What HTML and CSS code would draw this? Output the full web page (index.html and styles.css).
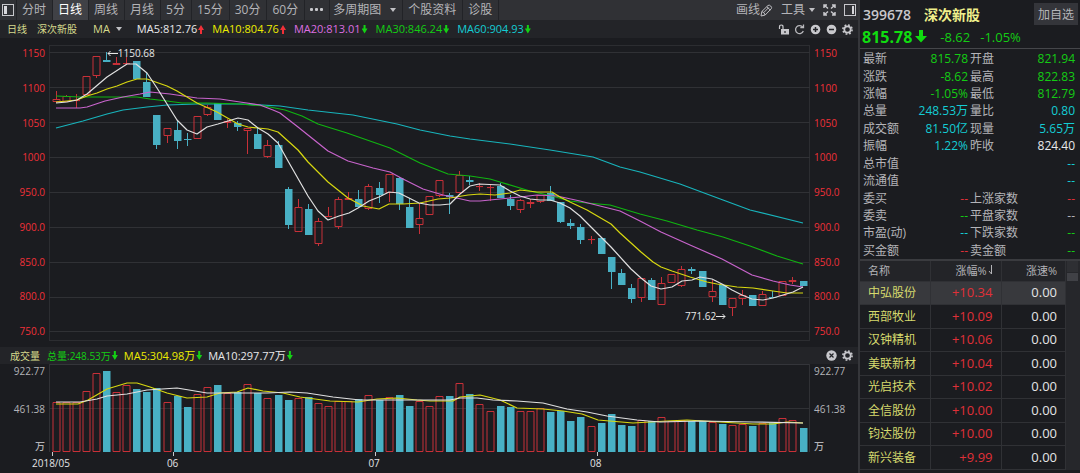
FILE: index.html
```html
<!DOCTYPE html>
<html lang="zh-CN">
<head>
    <meta charset="UTF-8">
    <meta name="viewport" content="width=device-width, initial-scale=1.0">
    <title>深次新股 399678</title>
    <link rel="stylesheet" href="styles.css">
</head>
<body>
    <main class="main">
        <nav class="toolbar">
            <button class="tool-icon panel-left" aria-label="左侧栏">
                <svg width="12" height="12" viewBox="0 0 12 12"><rect x="0.5" y="0.5" width="11" height="11" fill="none" stroke="#c8c8cc"/><rect x="2" y="2" width="3" height="8" fill="#d8d8dc"/></svg>
            </button>
            <button class="tab">分时</button>
            <button class="tab active">日线</button>
            <button class="tab">周线</button>
            <button class="tab">月线</button>
            <button class="tab">5分</button>
            <button class="tab">15分</button>
            <button class="tab">30分</button>
            <button class="tab">60分</button>
            <button class="tab" aria-label="更多">
                <svg width="13" height="4" viewBox="0 0 13 4" fill="#c8c8cc"><rect width="3" height="3" rx="1"/><rect x="5" width="3" height="3" rx="1"/><rect x="10" width="3" height="3" rx="1"/></svg>
            </button>
            <button class="tab period">多周期图<i class="caret"></i></button>
            <button class="tab">个股资料</button>
            <button class="tab">诊股</button>
            <div class="tools">
                <button>画线<svg width="13" height="13" viewBox="0 0 13 13" fill="none" stroke="#c0c0c4"><path d="M1 12l.8-4.500L8 1.500q1.200-1 2.700.5t.6 2.700L5.200 11zM1.800 7.500q2.500.5 3.400 3.500M6.800 2.700l3.500 3.400M3.800 8.500l5-5"/></svg></button>
                <button>工具<i class="caret"></i></button>
                <button aria-label="全屏"><svg width="13" height="12" viewBox="0 0 13 12" fill="none" stroke="#c8c8cc" stroke-width="1.500"><path d="M1 4V1h3M1 1l4 3.500M9 1h3v3M12 1L8 4.500M1 8v3h3M1 11l4-3.500M9 11h3V8M12 11L8 7.500"/></svg></button>
                <button aria-label="右侧栏"><svg width="12" height="12" viewBox="0 0 12 12"><rect x="0.5" y="0.5" width="11" height="11" fill="none" stroke="#c8c8cc"/><rect x="8" y="2" width="2" height="8" fill="#d8d8dc"/></svg></button>
            </div>
        </nav>

        <section class="legend">
            <span class="name">日线</span>
            <span class="name stock">深次新股</span>
            <button class="ma-select">MA<i class="caret"></i></button>
            <span class="ma white">MA5:812.76<i class="arrow up"></i></span>
            <span class="ma yellow">MA10:804.76<i class="arrow up"></i></span>
            <span class="ma purple">MA20:813.01<i class="arrow down"></i></span>
            <span class="ma green">MA30:846.24<i class="arrow down"></i></span>
            <span class="ma cyan">MA60:904.93<i class="arrow down"></i></span>
            <div class="legend-icons">
                <button aria-label="锁定"><svg width="11" height="11" viewBox="0 0 11 11"><path d="M1.500 5V3q0-2 1.800-2T5 3v2" fill="none" stroke="#c8c8cc" stroke-width="1.200"/><path d="M3 5h8v5.500H3z" fill="#c8c8cc"/><path d="M7 7v2" stroke="#232428" stroke-width="1.200"/></svg></button>
                <button aria-label="刷新"><svg width="11" height="11" viewBox="0 0 11 11" fill="none" stroke="#b8b8bc" stroke-width="1.300"><path d="M8.800 3.200A4 4 0 1 0 9.300 7M6.300 3.700h3.200V.5"/></svg></button>
                <button aria-label="放大"><svg width="11" height="11" viewBox="0 0 11 11"><circle cx="5.500" cy="5.500" r="4.800" fill="#c8c8cc"/><path d="M3 5.500h5M5.500 3v5" stroke="#232428" stroke-width="1.500"/></svg></button>
                <button aria-label="缩小"><svg width="11" height="11" viewBox="0 0 11 11"><circle cx="5.500" cy="5.500" r="4.800" fill="#c8c8cc"/><path d="M3 5.500h5" stroke="#232428" stroke-width="1.500"/></svg></button>
                <button aria-label="设置"><svg width="11" height="11" viewBox="0 0 11 11" fill="none" stroke="#c8c8cc"><circle cx="5.500" cy="5.500" r="3.200" stroke-width="1.700"/><circle cx="5.500" cy="5.500" r="4.600" stroke-width="1.600" stroke-dasharray="1.800 1.813"/></svg></button>
            </div>
        </section>

        <section class="chart">
            <div class="axis axis-left">
                <span>1150</span><span>1100</span><span>1050</span><span>1000</span><span>950.0</span><span>900.0</span><span>850.0</span><span>800.0</span><span>750.0</span>
            </div>
            <div class="plot">
                <svg id="kline" viewBox="49 45 761 296" preserveAspectRatio="none"></svg>
                <span class="note high"><svg width="11" height="7" viewBox="0 0 11 7" fill="none" stroke="#e8e8e8"><path d="M11 3.500H1M3.500 1L1 3.500 3.500 6"/></svg>1150.68</span>
                <span class="note low">771.62<svg width="10" height="7" viewBox="0 0 10 7" fill="none" stroke="#e8e8e8"><path d="M0 3.500h9M6.500 1L9 3.500 6.500 6"/></svg></span>
            </div>
            <div class="axis">
                <span>1150</span><span>1100</span><span>1050</span><span>1000</span><span>950.0</span><span>900.0</span><span>850.0</span><span>800.0</span><span>750.0</span>
            </div>
        </section>

        <section class="legend volume-legend">
            <span class="name">成交量</span>
            <span class="ma small green">总量:248.53万<i class="arrow down"></i></span>
            <span class="ma yellow">MA5:304.98万<i class="arrow down"></i></span>
            <span class="ma white">MA10:297.77万<i class="arrow down"></i></span>
            <div class="legend-icons">
                <button aria-label="关闭"><svg width="11" height="11" viewBox="0 0 11 11"><circle cx="5.500" cy="5.500" r="5.200" fill="#c8c8cc"/><path d="M3.500 3.500l4 4M7.500 3.500l-4 4" stroke="#232428" stroke-width="1.200"/></svg></button>
                <button aria-label="设置"><svg width="11" height="11" viewBox="0 0 11 11" fill="none" stroke="#c8c8cc"><circle cx="5.500" cy="5.500" r="3.200" stroke-width="1.700"/><circle cx="5.500" cy="5.500" r="4.600" stroke-width="1.600" stroke-dasharray="1.800 1.813"/></svg></button>
            </div>
        </section>

        <section class="chart volume">
            <div class="axis axis-left"><span>922.77</span><span>461.38</span><span>万</span></div>
            <div class="plot"><svg id="volume" viewBox="49 364 761 93" preserveAspectRatio="none"></svg></div>
            <div class="axis"><span>922.77</span><span>461.38</span><span>万</span></div>
        </section>

        <div class="dates"><span>2018/05</span><span>06</span><span>07</span><span>08</span></div>
    </main>

    <aside class="side">
        <header class="stock-head">
            <div class="title">
                <span class="code">399678</span>
                <h1>深次新股</h1>
                <button class="add">加自选</button>
            </div>
            <div class="price">
                <strong>815.78</strong>
                <svg width="12" height="13" viewBox="0 0 12 13" fill="#10dc10"><path d="M4 0h4v6h4l-6 6.500L0 6h4z"/></svg>
                <span class="change">-8.62</span>
                <span>-1.05%</span>
            </div>
        </header>

        <dl class="quote">
            <div><dt>最新</dt><dd class="green">815.78</dd></div>
            <div><dt>开盘</dt><dd class="green">821.94</dd></div>
            <div><dt>涨跌</dt><dd class="green">-8.62</dd></div>
            <div><dt>最高</dt><dd class="green">822.83</dd></div>
            <div><dt>涨幅</dt><dd class="green">-1.05%</dd></div>
            <div><dt>最低</dt><dd class="green">812.79</dd></div>
            <div><dt>总量</dt><dd class="cyan">248.53万</dd></div>
            <div><dt>量比</dt><dd class="cyan">0.80</dd></div>
            <div><dt>成交额</dt><dd class="cyan">81.50亿</dd></div>
            <div><dt>现量</dt><dd class="cyan">5.65万</dd></div>
            <div><dt>振幅</dt><dd class="cyan">1.22%</dd></div>
            <div><dt>昨收</dt><dd class="white">824.40</dd></div>
            <div class="wide"><dt>总市值</dt><dd class="cyan">--</dd></div>
            <div class="wide"><dt>流通值</dt><dd class="cyan">--</dd></div>
            <div><dt>委买</dt><dd class="red">--</dd></div>
            <div><dt>上涨家数</dt><dd class="red">--</dd></div>
            <div><dt>委卖</dt><dd class="green">--</dd></div>
            <div><dt>平盘家数</dt><dd>--</dd></div>
            <div><dt>市盈(动)</dt><dd class="cyan">--</dd></div>
            <div><dt>下跌家数</dt><dd class="green">--</dd></div>
            <div><dt>买金额</dt><dd class="red">--</dd></div>
            <div><dt>卖金额</dt><dd class="green">--</dd></div>
        </dl>

        <div class="list">
            <table>
                <thead>
                    <tr><th>名称</th><th>涨幅%<svg width="5" height="10" viewBox="0 0 5 10" fill="none" stroke="#b4b4b8"><path d="M3.500 0v9L1 6"/></svg></th><th>涨速%</th></tr>
                </thead>
                <tbody>
                    <tr class="selected"><td>中弘股份</td><td>+10.34</td><td>0.00</td></tr>
                    <tr><td>西部牧业</td><td>+10.09</td><td>0.00</td></tr>
                    <tr><td>汉钟精机</td><td>+10.06</td><td>0.00</td></tr>
                    <tr><td>美联新材</td><td>+10.04</td><td>0.00</td></tr>
                    <tr><td>光启技术</td><td>+10.02</td><td>0.00</td></tr>
                    <tr><td>全信股份</td><td>+10.00</td><td>0.00</td></tr>
                    <tr><td>钧达股份</td><td>+10.00</td><td>0.00</td></tr>
                    <tr><td>新兴装备</td><td>+9.99</td><td>0.00</td></tr>
                </tbody>
            </table>
            <div class="scroll"><i class="scroll-up"></i><i class="scroll-thumb"></i></div>
        </div>
    </aside>

    <script src="chart.js"></script>
</body>
</html>
```

FILE: styles.css
```css
* {
    box-sizing: border-box;
}

body {
    display: grid;
    grid-template-columns: minmax(0, 1fr) 222px;
    min-height: 100vh;
    margin: 0;
    background: #1b1c20;
    color: #b4b4b8;
    font-family: "Open Sans", "Noto Sans CJK SC", sans-serif;
    font-size: 12px;
    overflow: hidden;
}

button {
    display: flex;
    align-items: center;
    padding: 0;
    border: 0;
    background: none;
    color: inherit;
    font: inherit;
    cursor: pointer;
}

svg {
    display: block;
}

.white { color: #e8e8ea; }
.yellow { color: #ecec00; }
.purple { color: #dc6ee0; }
.green { color: #14cc14; }
.cyan { color: #14ccd4; }
.red { color: #e03038; }

/* toolbar */
.toolbar {
    display: flex;
    height: 20px;
    background: #303135;
    line-height: 20px;
    white-space: nowrap;
}

.tool-icon {
    width: 17px;
    padding-left: 2px;
    border-right: 1px solid #222327;
}

.tab {
    padding: 0 6px 0 5px;
    border-right: 1px solid #222327;
}

.tab.active {
    background: #404146;
    color: #fff;
}

.period {
    padding-left: 3px;
}

.caret {
    margin-left: 9px;
    border: 3px solid transparent;
    border-top: 4px solid #c0c0c4;
    border-bottom: 0;
}

.tools {
    display: flex;
    gap: 8px;
    margin-left: auto;
    padding-right: 2px;
}

.tools .caret {
    margin-left: 4px;
}

/* indicator rows */
.legend {
    display: flex;
    align-items: center;
    height: 18px;
    padding: 0 5px 0 7px;
    background: #232428;
    font-size: 11px;
    line-height: 16px;
    white-space: nowrap;
}

.name {
    color: #d6da8c;
    font-size: 10px;
}

.stock {
    margin-left: 10px;
}

.ma-select {
    margin: 0 15px 0 16px;
    color: #d6da8c;
}

.ma-select .caret {
    margin-left: 6px;
}

.ma {
    display: flex;
    align-items: center;
    margin-right: 8px;
}

.ma.small {
    margin-left: 7px;
    font-size: 10px;
}

.arrow {
    width: 6px;
    height: 9px;
    margin-left: 1px;
    background: #14d014;
    clip-path: polygon(33% 0, 67% 0, 67% 45%, 100% 45%, 50% 100%, 0 45%, 33% 45%);
}

.arrow.up {
    background: #f03038;
    transform: rotate(180deg);
}

.legend-icons {
    display: flex;
    gap: 5px;
    margin-left: auto;
}

/* charts */
.chart {
    display: grid;
    grid-template-columns: 49px minmax(0, 1fr) 48px;
    height: 296px;
    margin: 7px 0 6px;
}

.plot {
    position: relative;
}

.plot svg[id] {
    width: 100%;
    height: 100%;
}

.axis {
    display: flex;
    flex-direction: column;
    justify-content: space-between;
    padding: 1px 0 3px 4px;
    color: #f03038;
    font-size: 10px;
    font-weight: 500;
    line-height: 14px;
}

.axis-left {
    padding-right: 4px;
    text-align: right;
}

.note {
    position: absolute;
    display: flex;
    align-items: center;
    color: #e8e8e8;
    font-size: 10px;
    font-weight: 500;
    line-height: 14px;
}

.high {
    top: 1px;
    left: 7.6%;
}

.low {
    right: 11%;
    bottom: 18px;
}

.volume-legend {
    height: 17px;
    padding-left: 10px;
}

.volume-legend .ma {
    margin-right: 6px;
}

.volume {
    height: 93px;
    margin: 0;
}

.volume .axis {
    padding: 0 0 4px 4px;
    color: #b4b4b8;
}

.volume .axis-left {
    padding-right: 4px;
}

.dates {
    display: grid;
    grid-template-columns: 15% 25% 27.5% 1fr;
    padding-left: 52px;
    color: #e4e4e6;
    font-size: 10px;
    font-weight: 500;
    line-height: 13px;
}

.dates span {
    text-indent: -6px;
}

.dates span:first-child {
    text-indent: -20px;
}

/* right panel */
.side {
    border-left: 2px solid #35363a;
}

.stock-head {
    padding: 3px 2px 0 3px;
    border-bottom: 1px solid #45464a;
}

.title {
    display: flex;
    align-items: center;
    height: 22px;
}

.code {
    color: #c8c8cc;
    font-size: 14px;
    font-weight: 600;
}

.title h1 {
    margin: 0 0 0 13px;
    color: #f0f08c;
    font-size: 14px;
    font-weight: bold;
}

.add {
    height: 22px;
    margin-left: auto;
    padding: 0 4px;
    background: #34353a;
}

.price {
    display: flex;
    align-items: center;
    height: 23px;
    color: #14cc14;
    font-size: 13px;
}

.price strong {
    margin: 0 3px 0 -1px;
    color: #10dc10;
    font-size: 16px;
}

.change {
    margin: 0 10px 0 13px;
}

.quote {
    display: grid;
    grid-template-columns: 1fr 1fr;
    grid-auto-rows: 1fr;
    column-gap: 2px;
    height: 210px;
    margin: 0;
    padding: 1px 5px 0 3px;
}

.quote div {
    display: flex;
    align-items: center;
    justify-content: space-between;
    line-height: 17px;
}

.quote .wide {
    grid-column: span 2;
}

.quote dd {
    margin: 0;
}

.list {
    display: flex;
    border-top: 2px solid #3a3b3f;
}

table {
    flex: 1;
    border-collapse: collapse;
    table-layout: fixed;
}

th,
td {
    padding: 0 8px;
    border-right: 1px solid #303135;
    border-bottom: 1px solid #303135;
    text-align: right;
    line-height: 17px;
}

th {
    height: 20px;
    background: #232428;
    font-size: 11px;
    font-weight: normal;
}

th svg {
    display: inline-block;
    margin-left: 1px;
}

th:first-child,
td:first-child {
    width: 70px;
    text-align: left;
}

th:nth-child(2) {
    width: 71px;
}

td {
    height: 23px;
    color: #e4e4e6;
    font-size: 13px;
}

tr:nth-child(even) td {
    height: 24px;
}

td:first-child {
    color: #d6da6e;
    font-size: 12px;
}

td:nth-child(2) {
    color: #e03038;
}

.selected {
    background: #38393d;
}

.scroll {
    width: 14px;
    padding: 0 2px 0 1px;
    background: #26272b;
}

.scroll i {
    display: block;
}

.scroll-up {
    height: 11px;
    background: #2e2f33;
}

.scroll-thumb {
    height: 8px;
    margin-top: 1px;
    background: #404146;
}
```

FILE: chart.js
```js
// one row per day: [rising, body top, body bottom, high, low, volume top]
const days = [
    [1, 99, 102, 91, 103, 402], [1, 96, 102, 95, 102, 402], [1, 100, 100, 94, 108, 402],
    [1, 76, 95, 76, 95, 391], [1, 56, 76, 56, 78, 373], [0, 60, 62, 52, 62, 371],
    [1, 63, 65, 57, 65, 392], [1, 63, 63, 57, 65, 385], [0, 61, 79, 61, 79, 389],
    [0, 82, 97, 73, 97, 392], [0, 115, 145, 115, 149, 388], [1, 128, 136, 128, 143, 402],
    [0, 130, 141, 120, 149, 396], [0, 139, 139, 133, 146, 407], [1, 116, 139, 116, 139, 394],
    [1, 107, 115, 105, 116, 387], [0, 103, 120, 103, 120, 385], [1, 121, 123, 119, 128, 393],
    [0, 123, 127, 121, 131, 392], [1, 128, 131, 128, 154, 384], [0, 134, 149, 127, 149, 393],
    [1, 145, 157, 140, 158, 398], [0, 145, 168, 141, 168, 395], [0, 189, 225, 187, 229, 400],
    [1, 207, 232, 199, 232, 398], [0, 209, 235, 204, 235, 397], [1, 221, 244, 218, 246, 403],
    [1, 216, 216, 207, 216, 406], [1, 199, 227, 197, 229, 401], [1, 198, 200, 192, 200, 401],
    [0, 199, 207, 190, 207, 399], [1, 186, 209, 184, 210, 395], [0, 188, 195, 182, 203, 400],
    [1, 174, 193, 174, 202, 397], [0, 178, 204, 177, 210, 395], [0, 207, 228, 198, 228, 406],
    [1, 218, 225, 203, 234, 401], [1, 196, 215, 196, 215, 406], [1, 180, 196, 180, 197, 396],
    [0, 195, 197, 193, 214, 396], [1, 175, 193, 171, 193, 383], [0, 180, 182, 176, 185, 394],
    [1, 186, 186, 183, 191, 404], [1, 187, 188, 185, 201, 411], [0, 186, 198, 183, 198, 406],
    [0, 199, 206, 195, 210, 407], [1, 200, 210, 199, 213, 411], [1, 202, 204, 199, 208, 411],
    [1, 195, 202, 195, 203, 408], [0, 193, 201, 186, 201, 412], [0, 202, 222, 202, 223, 411],
    [0, 223, 226, 219, 229, 421], [0, 227, 240, 224, 244, 417], [1, 239, 239, 236, 244, 426],
    [0, 238, 254, 238, 254, 423], [0, 257, 272, 257, 289, 414], [0, 273, 285, 269, 285, 425],
    [0, 288, 299, 284, 303, 426], [1, 278, 298, 278, 302, 420], [0, 280, 300, 278, 300, 421],
    [1, 283, 305, 277, 305, 417], [1, 274, 283, 274, 283, 421], [1, 269, 286, 266, 287, 420],
    [0, 269, 271, 267, 274, 421], [0, 271, 287, 271, 287, 421], [1, 291, 297, 280, 302, 422],
    [0, 285, 305, 285, 305, 424], [1, 298, 308, 298, 316, 425], [1, 295, 299, 290, 305, 424],
    [0, 295, 306, 295, 306, 426], [1, 294, 306, 291, 306, 423], [0, 297, 297, 291, 297, 423],
    [1, 281, 296, 281, 296, 418], [1, 280, 282, 277, 284, 420], [0, 281, 286, 281, 286, 428]
];

const priceLines = {
    '#18b4bc': '56,128 83,121 107,114 123,110 147,107 167,105 197,104 240,104 280,106 308,110 353,115 397,124 420,130 450,136 470,139 510,144 550,150 593,157 620,167 640,172 680,184 723,200 750,210 803,223',
    '#10b410': '56,96 80,97 100,97 137,97 150,99 167,101 182,103 207,103 240,104 265,106 285,110 302,116 318,124 347,133 390,148 420,163 448,174 470,176 490,179 500,182 530,191 552,196 570,201 587,203 610,205 640,214 667,221 697,230 723,237 750,246 777,256 803,264',
    '#c864cc': '56,108 80,108 87,107 105,101 123,97 140,94 150,92 170,94 197,98 220,99 240,102 260,105 273,110 280,113 298,127 328,151 348,161 373,168 390,172 403,179 423,189 443,195 470,201 480,201 500,199 520,197 537,195 557,196 580,201 600,206 620,211 640,221 661,232 690,245 722,259 752,275 773,281 790,285 803,287',
    '#d8d810': '56,102 67,101 77,100 87,96 97,93 107,89 117,86 127,82 137,79 147,79 167,86 177,91 197,103 217,112 238,124 248,127 258,128 268,129 278,132 298,150 308,162 328,182 348,198 363,206 379,209 389,204 403,204 420,203 438,199 450,198 468,195 480,194 495,195 510,193 520,190 537,192 552,192 560,197 570,202 587,210 611,224 620,233 641,252 653,262 661,267 672,271 690,277 707,282 717,284 737,287 753,288 773,291 787,293 803,293',
    '#e0e0e0': '56,103 67,102 77,100 87,94 107,77 127,64 136,64 147,73 157,88 177,120 187,130 197,134 207,127 218,124 228,121 238,118 248,120 258,128 268,134 278,143 288,161 308,196 318,211 328,220 339,216 349,213 358,208 369,201 379,197 389,192 399,193 409,198 419,203 430,205 440,205 450,204 460,194 470,186 479,184 500,185 510,191 520,196 530,199 540,200 550,200 560,203 570,208 580,216 601,237 611,247 631,269 641,278 651,286 661,289 672,287 682,281 692,280 700,277 712,279 722,284 732,290 742,295 752,299 763,300 773,298 783,295 793,292 803,287'
};

const volumeLines = {
    '#d8d810': '56,404 78,404 88,400 107,389 127,383 137,383 150,387 167,393 187,398 207,397 220,393 237,392 248,388 263,391 283,393 300,397 330,401 358,402 377,399 397,398 417,400 430,401 453,401 460,397 480,395 500,400 517,408 543,409 563,411 582,414 598,420 633,423 667,421 687,420 720,422 753,424 773,424 787,422 803,423',
    '#e0e0e0': '56,402 80,402 97,399 107,396 127,394 147,390 177,388 207,393 267,393 290,392 307,393 333,397 360,400 400,400 430,400 450,400 460,398 477,398 493,400 517,401 543,403 567,409 587,412 607,416 637,420 660,422 700,421 753,422 803,423'
};

const line = (x1, y1, x2, y2, color) =>
    `<path d="M${x1} ${y1}L${x2} ${y2}" stroke="${color}" vector-effect="non-scaling-stroke"/>`;

const curves = lines => Object.entries(lines).map(([color, points]) =>
    `<polyline points="${points}" fill="none" stroke="${color}" stroke-width="1.2" stroke-linejoin="round" vector-effect="non-scaling-stroke"/>`).join('');

const bar = (x, top, bottom, rising) => rising
    ? `<rect x="${x - 3.5}" y="${top + 0.5}" width="7" height="${Math.max(bottom - top - 1, 0.1)}" fill="none" stroke="#c83038" vector-effect="non-scaling-stroke"/>`
    : `<rect x="${x - 3.5}" y="${top}" width="7.5" height="${Math.max(bottom - top, 1)}" fill="#48b0c4"/>`;

let candles = '';
let volumes = '';

days.forEach(([rising, top, bottom, high, low, volume], i) => {
    const x = Math.round(55.5 + i * 10.095) + 0.5;
    const color = rising ? '#c83038' : '#48b0c4';
    candles += line(x, high, x, top, color) + line(x, bottom, x, low, color) + bar(x, top, bottom, rising);
    volumes += bar(x, volume, 452, rising);
});

// horizontal grid, 50 points apart
let grid = line(49.5, 45, 49.5, 341, '#2c2d31') + line(809.5, 45, 809.5, 341, '#2c2d31')
    + line(49, 45.5, 810, 45.5, '#2c2d31') + line(49, 340.5, 810, 340.5, '#2c2d31');
[52, 87, 122, 157, 192, 227, 262, 297, 331].forEach(y => {
    grid += line(49, y + 0.5, 810, y + 0.5, '#303135');
});

let volumeGrid = line(49, 364.5, 810, 364.5, '#34353a') + line(49, 408.5, 810, 408.5, '#303135')
    + line(49.5, 364, 49.5, 452, '#303135') + line(809.5, 364, 809.5, 452, '#303135');
[52, 173, 375, 597].forEach(x => {
    volumeGrid += line(x + 0.5, 452, x + 0.5, 456, '#c8c8cc');
});

document.getElementById('kline').innerHTML = grid + candles + curves(priceLines);
document.getElementById('volume').innerHTML = volumeGrid + volumes + curves(volumeLines);
```
